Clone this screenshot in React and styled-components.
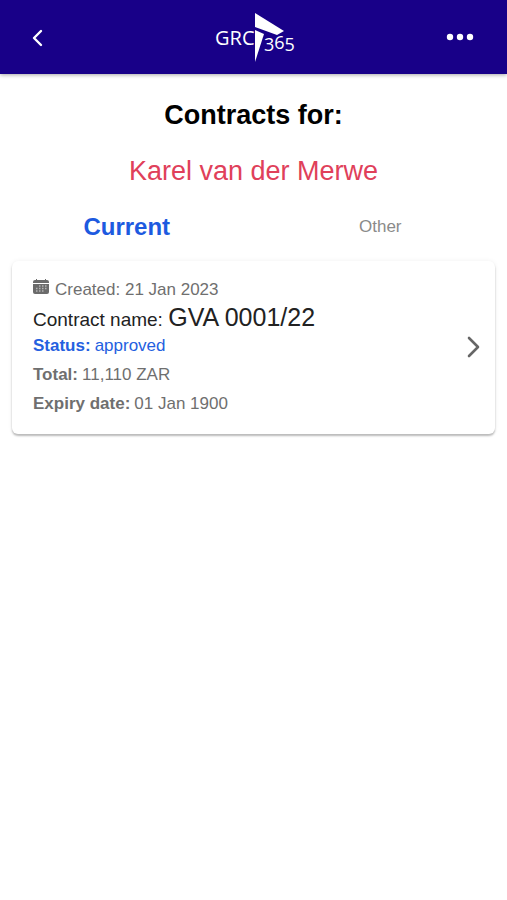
import { useState } from 'react';

import styled, { createGlobalStyle } from 'styled-components';

const GlobalStyle = createGlobalStyle`
  * {
    box-sizing: border-box;
  }

  body {
    margin: 0;
    background-color: #FFFFFF;
    font-family: "Liberation Sans", Arial, sans-serif;
    -webkit-font-smoothing: antialiased;
  }

  h1, h2, p {
    margin: 0;
  }

  svg {
    display: block;
  }
`;

const Header = styled.header`
  display: grid;
  grid-template-columns: 1fr auto 1fr;
  align-items: center;
  height: 74px;
  padding: 0 22px;
  background-color: #180088;
  box-shadow: 0 1px 4px rgba(0, 0, 0, .35);
`;

const IconButton = styled.button`
  justify-self: ${({ $align }) => $align};
  padding: 0;
  border: 0;
  background: none;
  color: #FFFFFF;
  cursor: pointer;
`;

const LogoText = styled.text`
  font-family: "Open Sans", "Noto Sans", sans-serif;
  font-size: ${({ $size }) => $size}px;
  fill: #FFFFFF;
`;

const Main = styled.main`
  padding-bottom: 24px;
`;

const Heading = styled.div`
  padding: 24px 16px 0;
  text-align: center;
  font-size: 27px;
  line-height: 34px;
`;

const Title = styled.h1`
  font-size: inherit;
  font-weight: bold;
  color: #000000;
`;

const Person = styled.h2`
  margin-top: 22px;
  font-size: inherit;
  font-weight: normal;
  color: #E0405A;
`;

const Tabs = styled.div`
  display: grid;
  grid-template-columns: 1fr 1fr;
  align-items: center;
  height: 73px;
  padding-top: 4px;
`;

const Tab = styled.button`
  padding: 0;
  border: 0;
  background: none;
  font-family: inherit;
  font-size: ${({ $active }) => ($active ? 24 : 17)}px;
  font-weight: ${({ $active }) => ($active ? 'bold' : 'normal')};
  line-height: 32px;
  color: ${({ $active }) => ($active ? '#1D5AE0' : '#8A8A8A')};
  cursor: pointer;
`;

const Card = styled.a`
  display: flex;
  align-items: center;
  justify-content: space-between;
  margin: 0 12px;
  padding: 14px 12px 16px 21px;
  border-radius: 6px;
  background-color: #FFFFFF;
  box-shadow: 0 2px 2px rgba(0, 0, 0, .25), 0 0 5px rgba(0, 0, 0, .06);
  color: #6F6F6F;
  text-decoration: none;
`;

const Row = styled.p`
  display: flex;
  align-items: center;
  gap: 4px;
  font-size: 17px;
  line-height: 29px;
`;

const Status = styled(Row)`
  margin-bottom: 2px;
  line-height: 25px;
  color: #2460E0;
`;

const ContractName = styled.p`
  font-size: 19px;
  line-height: 27px;
  color: #222222;

  span {
    font-size: 25px;
  }
`;

const Calendar = styled.svg`
  margin: 0 2px 5px 0;
`;

function Logo() {
  return (
    <svg width="80" height="52" viewBox="0 0 80 52" overflow="visible" role="img" aria-label="GRC 365">
      <LogoText $size={20} x="1" y="34">GRC</LogoText>
      <path d="M41 2L70 20L63 24L41 16Z" fill="#FFFFFF" />
      <path d="M41 19L50 23L41 51Z" fill="#FFFFFF" />
      <LogoText $size={18} x="50" y="40">
        3
        <tspan dy="-2">6</tspan>
        <tspan dy="2">5</tspan>
      </LogoText>
    </svg>
  );
}

function CalendarIcon() {
  return (
    <Calendar width="16" height="16" viewBox="0 0 16 16" fill="#6B6B6B" aria-hidden="true">
      <path d="M2 1H3V0H4V1H12V0H13V1H14A2 2 0 0 1 16 3V4H0V3A2 2 0 0 1 2 1Z" />
      <path d="M0 5H16V13A2 2 0 0 1 14 15H2A2 2 0 0 1 0 13Z" />
      <path
        d="M6 7H7.5M9 7H10.5M12 7H13.5M3 9.5H4.5M6 9.5H7.5M9 9.5H10.5M12 9.5H13.5M3 12H4.5M6 12H7.5M9 12H10.5"
        stroke="#B4B4B4"
        strokeWidth="1.4"
      />
    </Calendar>
  );
}

export default function App() {
  const [tab, setTab] = useState('Current');

  return (
    <>
      <GlobalStyle />
      <Header>
        <IconButton $align="start" type="button" aria-label="Back">
          <svg width="32" height="32" viewBox="0 0 32 32" fill="none">
            <path d="M19 10L12 17L19 24" stroke="currentColor" strokeWidth="2.4" strokeLinecap="round" strokeLinejoin="round" />
          </svg>
        </IconButton>
        <Logo />
        <IconButton $align="end" type="button" aria-label="More">
          <svg width="50" height="32" viewBox="0 0 50 32" fill="currentColor">
            <circle cx="15" cy="16" r="3.2" />
            <circle cx="25" cy="16" r="3.2" />
            <circle cx="35" cy="16" r="3.2" />
          </svg>
        </IconButton>
      </Header>
      <Main>
        <Heading>
          <Title>Contracts for:</Title>
          <Person>Karel van der Merwe</Person>
        </Heading>
        <Tabs>
          {['Current', 'Other'].map((name) => (
            <Tab key={name} type="button" $active={name === tab} onClick={() => setTab(name)}>
              {name}
            </Tab>
          ))}
        </Tabs>
        <Card href="#contract">
          <div>
            <Row>
              <CalendarIcon />
              Created: 21 Jan 2023
            </Row>
            <ContractName>
              Contract name:
              {' '}
              <span>GVA 0001/22</span>
            </ContractName>
            <Status>
              <strong>Status:</strong>
              approved
            </Status>
            <Row>
              <strong>Total:</strong>
              11,110 ZAR
            </Row>
            <Row>
              <strong>Expiry date:</strong>
              01 Jan 1900
            </Row>
          </div>
          <svg width="20" height="24" viewBox="0 0 20 24" fill="none" aria-hidden="true">
            <path d="M6 3L15 12L6 21" stroke="#666666" strokeWidth="2.6" strokeLinecap="round" strokeLinejoin="round" />
          </svg>
        </Card>
      </Main>
    </>
  );
}
